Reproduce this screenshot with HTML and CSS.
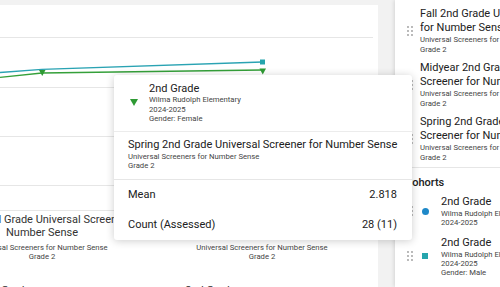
FILE: index.html
```html
<!DOCTYPE html>
<html>
<head>
<meta charset="utf-8">
<link rel="stylesheet" href="styles.css">
</head>
<body>
<div class="page">
  <div class="main">
    <div class="chart">
      <svg class="plot" width="378" height="206" viewBox="0 0 378 206">
        <g class="grid">
          <line x1="0" y1="32.5" x2="373" y2="32.5"/>
          <line x1="0" y1="82.5" x2="373" y2="82.5"/>
          <line x1="0" y1="131.5" x2="373" y2="131.5"/>
          <line x1="0" y1="180.5" x2="373" y2="180.5"/>
          <line x1="0" y1="205.5" x2="373" y2="205.5"/>
        </g>
        <polyline class="s-teal" points="0,67.5 42,64.3 262.5,57"/>
        <polyline class="s-green" points="0,72.3 42,68 262.5,65"/>
        <rect class="m-teal" x="260" y="54.5" width="5" height="5"/>
        <polygon class="m-green" points="39,65 45.5,65 42.25,71"/>
        <polygon class="m-green" points="259.5,63.5 266,63.5 262.75,69.5"/>
      </svg>
      <div class="axis-label" style="left:42px">
        <div class="axis-title">Midyear 2nd Grade Universal Screener for Number Sense</div>
        <div class="axis-sub">Universal Screeners for Number Sense</div>
        <div class="axis-sub">Grade 2</div>
      </div>
      <div class="axis-label" style="left:262px">
        <div class="axis-title">Spring 2nd Grade Universal Screener for Number Sense</div>
        <div class="axis-sub">Universal Screeners for Number Sense</div>
        <div class="axis-sub">Grade 2</div>
      </div>
    </div>
    <div class="legend">
      <span class="legend-item">2nd Grade</span>
      <span class="legend-item">2nd Grade</span>
    </div>

    <div class="tooltip">
      <div class="tt-head">
        <svg class="tt-marker" width="8" height="7" viewBox="0 0 8 7"><polygon points="0,0 8,0 4,7"/></svg>
        <div class="tt-cohort">
          <div class="tt-title">2nd Grade</div>
          <div class="tt-sub">Wilma Rudolph Elementary</div>
          <div class="tt-sub">2024-2025</div>
          <div class="tt-sub">Gender: Female</div>
        </div>
      </div>
      <div class="tt-source">
        <div class="tt-title">Spring 2nd Grade Universal Screener for Number Sense</div>
        <div class="tt-sub">Universal Screeners for Number Sense</div>
        <div class="tt-sub">Grade 2</div>
      </div>
      <div class="tt-stats">
        <div class="tt-row"><span>Mean</span><span>2.818</span></div>
        <div class="tt-row"><span>Count (Assessed)</span><span>28 (11)</span></div>
      </div>
    </div>
  </div>

  <aside class="side">
    <div class="src-list">
      <div class="src-item">
        <svg class="handle" width="6" height="10" viewBox="0 0 6 10"><circle cx="1" cy="1" r="0.9"/><circle cx="5" cy="1" r="0.9"/><circle cx="1" cy="5" r="0.9"/><circle cx="5" cy="5" r="0.9"/><circle cx="1" cy="9" r="0.9"/><circle cx="5" cy="9" r="0.9"/></svg>
        <div class="src-text">
          <div class="src-title">Fall 2nd Grade Universal Screener for Number Sense</div>
          <div class="src-sub">Universal Screeners for Number Sense</div>
          <div class="src-sub">Grade 2</div>
        </div>
      </div>
      <div class="src-item">
        <svg class="handle" width="6" height="10" viewBox="0 0 6 10"><circle cx="1" cy="1" r="0.9"/><circle cx="5" cy="1" r="0.9"/><circle cx="1" cy="5" r="0.9"/><circle cx="5" cy="5" r="0.9"/><circle cx="1" cy="9" r="0.9"/><circle cx="5" cy="9" r="0.9"/></svg>
        <div class="src-text">
          <div class="src-title">Midyear 2nd Grade Universal Screener for Number Sense</div>
          <div class="src-sub">Universal Screeners for Number Sense</div>
          <div class="src-sub">Grade 2</div>
        </div>
      </div>
      <div class="src-item">
        <svg class="handle" width="6" height="10" viewBox="0 0 6 10"><circle cx="1" cy="1" r="0.9"/><circle cx="5" cy="1" r="0.9"/><circle cx="1" cy="5" r="0.9"/><circle cx="5" cy="5" r="0.9"/><circle cx="1" cy="9" r="0.9"/><circle cx="5" cy="9" r="0.9"/></svg>
        <div class="src-text">
          <div class="src-title">Spring 2nd Grade Universal Screener for Number Sense</div>
          <div class="src-sub">Universal Screeners for Number Sense</div>
          <div class="src-sub">Grade 2</div>
        </div>
      </div>
    </div>
    <div class="cohorts">
      <div class="cohorts-head">Cohorts</div>
      <div class="coh-item">
        <svg class="handle" width="6" height="10" viewBox="0 0 6 10"><circle cx="1" cy="1" r="0.9"/><circle cx="5" cy="1" r="0.9"/><circle cx="1" cy="5" r="0.9"/><circle cx="5" cy="5" r="0.9"/><circle cx="1" cy="9" r="0.9"/><circle cx="5" cy="9" r="0.9"/></svg>
        <span class="coh-marker dot"></span>
        <div class="coh-text">
          <div class="coh-title">2nd Grade</div>
          <div class="coh-sub">Wilma Rudolph Elementary</div>
          <div class="coh-sub">2024-2025</div>
        </div>
      </div>
      <div class="coh-item">
        <svg class="handle" width="6" height="10" viewBox="0 0 6 10"><circle cx="1" cy="1" r="0.9"/><circle cx="5" cy="1" r="0.9"/><circle cx="1" cy="5" r="0.9"/><circle cx="5" cy="5" r="0.9"/><circle cx="1" cy="9" r="0.9"/><circle cx="5" cy="9" r="0.9"/></svg>
        <span class="coh-marker square"></span>
        <div class="coh-text">
          <div class="coh-title">2nd Grade</div>
          <div class="coh-sub">Wilma Rudolph Elementary</div>
          <div class="coh-sub">2024-2025</div>
          <div class="coh-sub">Gender: Male</div>
        </div>
      </div>
      <div class="coh-item">
        <svg class="handle" width="6" height="10" viewBox="0 0 6 10"><circle cx="1" cy="1" r="0.9"/><circle cx="5" cy="1" r="0.9"/><circle cx="1" cy="5" r="0.9"/><circle cx="5" cy="5" r="0.9"/><circle cx="1" cy="9" r="0.9"/><circle cx="5" cy="9" r="0.9"/></svg>
        <span class="coh-marker tri"></span>
        <div class="coh-text">
          <div class="coh-title">2nd Grade</div>
          <div class="coh-sub">Wilma Rudolph Elementary</div>
          <div class="coh-sub">2024-2025</div>
          <div class="coh-sub">Gender: Female</div>
        </div>
      </div>
    </div>
  </aside>
</div>
</body>
</html>
```

FILE: styles.css
```css
* { box-sizing: border-box; }
html, body {
  margin: 0;
  padding: 0;
  width: 500px;
  height: 287px;
  overflow: hidden;
  background: #f2f2f2;
  font-family: Roboto, "Liberation Sans", sans-serif;
  color: #212121;
}
.page {
  display: flex;
  width: 800px;
  height: 287px;
}
.main {
  position: relative;
  width: 378px;
  margin-top: 5px;
  background: #fff;
  flex: none;
}
.chart {
  position: relative;
  height: 279px;
}
.plot { display: block; }
.grid line { stroke: #e6e6e6; stroke-width: 1; }
.s-teal { fill: none; stroke: #2aa3b3; stroke-width: 1.3; }
.s-green { fill: none; stroke: #35a03a; stroke-width: 1.3; }
.m-teal { fill: #26a5ad; }
.m-green { fill: #2e9a33; }

.axis-label {
  position: absolute;
  top: 208px;
  width: 216px;
  transform: translateX(-50%);
  text-align: center;
}
.axis-title {
  font-size: 11px;
  line-height: 13px;
  color: #333;
}
.axis-sub {
  font-size: 7.7px;
  line-height: 9.5px;
  color: #444;
}
.axis-title + .axis-sub { margin-top: 3.5px; }

.legend {
  display: flex;
  gap: 155px;
  margin-left: -20px;
  font-size: 11px;
  line-height: 14px;
  color: #333;
}

.tooltip {
  position: absolute;
  left: 114px;
  top: 70px;
  width: 298px;
  background: #fff;
  border-radius: 3px;
  box-shadow: 0 1px 8px rgba(0,0,0,0.2);
  z-index: 5;
}
.tt-head {
  display: flex;
  align-items: center;
  gap: 11px;
  padding: 6.5px 14px 7.5px 16px;
  border-bottom: 1px solid #ececec;
}
.tt-marker { fill: #2e9a33; flex: none; }
.tt-title {
  font-size: 11px;
  line-height: 13.5px;
  color: #212121;
}
.tt-sub {
  font-size: 7.7px;
  line-height: 9.5px;
  color: #444;
}
.tt-source {
  padding: 6px 14px 8px;
  border-bottom: 1px solid #e6e6e6;
}
.tt-stats { padding: 0 15px 0 14px; }
.tt-row {
  display: flex;
  justify-content: space-between;
  height: 30px;
  align-items: center;
  font-size: 11px;
  color: #212121;
}

.side {
  margin-left: 17px;
  width: 300px;
  flex: none;
  background: #fff;
  box-shadow: -1px 0 4px rgba(0,0,0,0.12);
  padding-top: 7px;
}
.src-list {
  border-bottom: 1px solid #e6e6e6;
  padding-bottom: 4px;
}
.src-item {
  display: flex;
  align-items: center;
  gap: 7px;
  padding-left: 12px;
  margin-bottom: 6px;
}
.src-item:last-child { margin-bottom: 0; }
.handle { fill: #9a9a9a; flex: none; }
.src-text { width: 172px; }
.src-title {
  font-size: 11px;
  line-height: 13.5px;
  color: #212121;
}
.src-sub {
  font-size: 7.7px;
  line-height: 10px;
  color: #444;
}
.src-title + .src-sub { margin-top: 1px; }

.cohorts-head {
  font-size: 11px;
  font-weight: 500;
  line-height: 14px;
  padding: 8px 0 5px 10px;
}
.coh-item {
  display: flex;
  align-items: center;
  padding-left: 12px;
  margin-bottom: 8.5px;
}
.coh-item .handle { margin-right: 9px; }
.coh-title {
  font-size: 11px;
  line-height: 13.5px;
  color: #212121;
}
.coh-sub {
  font-size: 7.7px;
  line-height: 9px;
  color: #444;
}
.coh-title + .coh-sub { margin-top: 0.5px; }
.coh-marker {
  width: 7px;
  height: 7px;
  flex: none;
  margin-right: 12px;
}
.coh-marker.dot { background: #1e88c8; border-radius: 50%; }
.coh-marker.square { background: #26a5ad; width: 6px; height: 6px; margin-right: 13px; }
.coh-marker.tri {
  width: 0; height: 0;
  border-left: 4px solid transparent;
  border-right: 4px solid transparent;
  border-top: 7px solid #2e9a33;
}
.coh-text { width: 172px; }
```
